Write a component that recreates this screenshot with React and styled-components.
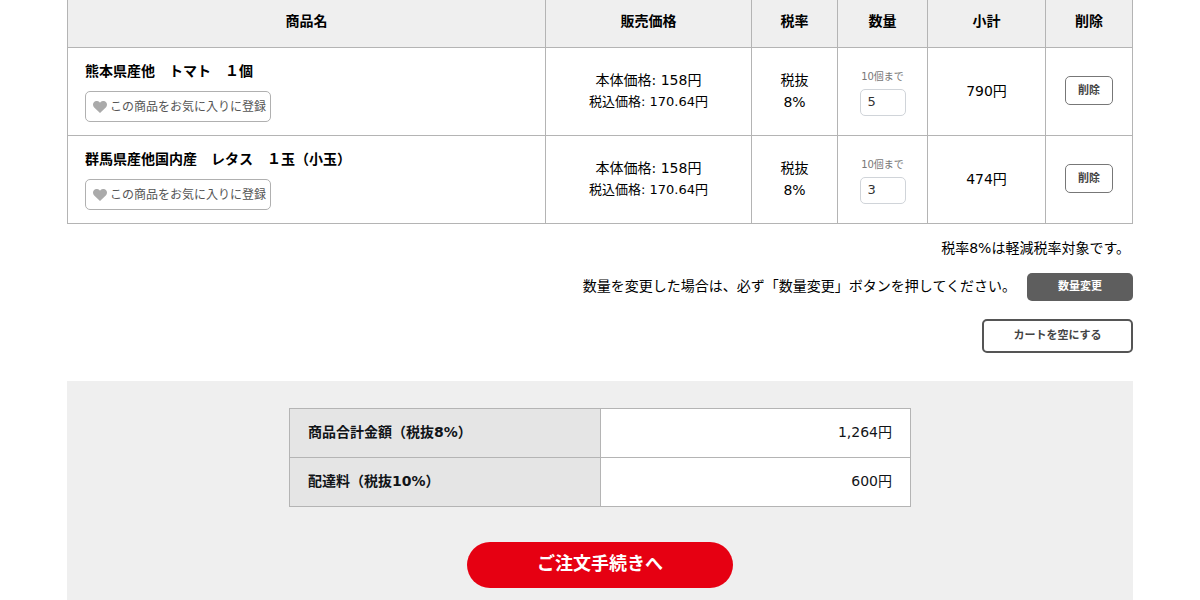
import React, { useState } from 'react';
import styled, { createGlobalStyle, css } from 'styled-components';

const GlobalStyle = createGlobalStyle`
  *, *::before, *::after { box-sizing: border-box; }
  body {
    margin: 0;
    background: #fff;
    color: #000;
    font-family: "DejaVu Sans", "Noto Sans CJK JP", sans-serif;
    font-size: 14px;
    line-height: 22px;
  }
  button, input { font-family: inherit; }
`;

const Page = styled.main`
  padding: 0 67px;
`;

const CartTable = styled.table`
  width: 100%;
  table-layout: fixed;
  border-collapse: collapse;
`;

const Col = styled.col`
  width: ${({ $width }) => ($width ? `${$width}px` : 'auto')};
`;

const HeadCell = styled.th`
  padding: 10px 0 15px;
  border: 1px solid #b4b4b4;
  border-top: 0;
  background: #efefef;
  font-weight: 700;
`;

const Cell = styled.td`
  padding: ${({ $product }) => ($product ? '12px 17px 13px' : '0 0 2px')};
  border: 1px solid #b4b4b4;
  text-align: ${({ $product }) => ($product ? 'left' : 'center')};
  vertical-align: middle;
`;

const ProductName = styled.div`
  margin-bottom: 9px;
  font-weight: 700;
`;

const FavoriteButton = styled.button`
  display: flex;
  align-items: center;
  gap: 3px;
  height: 31px;
  padding: 1px 4px 0 7px;
  border: 1px solid #b0b0b0;
  border-radius: 5px;
  background: #fff;
  color: #555;
  font-size: 12px;
  line-height: 18px;
  white-space: nowrap;
`;

const HeartIcon = styled.svg`
  flex: none;
  width: 14px;
  height: 12px;
  fill: #aaa;
`;

const TaxIncluded = styled.div`
  font-size: 13px;
`;

const QuantityField = styled.label`
  display: inline-flex;
  flex-direction: column;
  align-items: center;
  gap: 3px;
  padding-top: 2px;
  color: #777;
  font-size: 10px;
  line-height: 18px;
  vertical-align: middle;
`;

const QuantityInput = styled.input`
  width: 46px;
  height: 27px;
  padding: 0 7px 2px;
  border: 1px solid #d0d4d9;
  border-radius: 5px;
  background: #fff;
  color: #333;
  font-size: 13px;
`;

const variants = {
  remove: css`
    width: 48px;
    height: 29px;
    border: 1px solid #777;
    background: #fff;
    color: #444;
  `,
  update: css`
    width: 106px;
    height: 28px;
    border: 0;
    background: #5e5e5e;
    color: #fff;
  `,
  empty: css`
    width: 151px;
    height: 34px;
    border: 2px solid #555;
    background: #fff;
    color: #444;
  `,
};

const SmallButton = styled.button`
  padding: 0;
  border-radius: 5px;
  font-size: 11px;
  font-weight: 700;
  line-height: 16px;
  vertical-align: middle;
  ${({ $variant }) => variants[$variant]}
`;

const Actions = styled.div`
  display: flex;
  flex-direction: column;
  align-items: flex-end;
  padding: 13px 0 28px;
`;

const TaxNote = styled.p`
  margin: 0 0 14px;
  padding-right: 3px;
`;

const UpdateRow = styled.div`
  display: flex;
  align-items: center;
  gap: 11px;
  margin-bottom: 18px;
`;

const UpdateNote = styled.p`
  margin: 0;
  padding-bottom: 2px;
`;

const Summary = styled.section`
  display: flex;
  flex-direction: column;
  align-items: center;
  gap: 35px;
  padding: 27px 0 12px;
  background: #efefef;
`;

const SummaryTable = styled.table`
  width: 622px;
  max-width: 100%;
  table-layout: fixed;
  border-collapse: collapse;
  color: #111418;
`;

const SummaryLabel = styled.th`
  height: 49px;
  padding: 0 18px 2px;
  border: 1px solid #b4b4b4;
  background: #e5e5e5;
  text-align: left;
`;

const SummaryValue = styled.td`
  padding: 0 18px 2px;
  border: 1px solid #b4b4b4;
  background: #fff;
  text-align: right;
`;

const CheckoutButton = styled.button`
  width: 266px;
  height: 46px;
  padding: 0 0 2px;
  border: 0;
  border-radius: 23px;
  background: #e60012;
  color: #fff;
  font-size: 18px;
  font-weight: 700;
  line-height: 26px;
`;

const products = [
  { id: 'tomato', name: '熊本県産他　トマト　１個', quantity: '5', subtotal: '790円' },
  { id: 'lettuce', name: '群馬県産他国内産　レタス　１玉（小玉）', quantity: '3', subtotal: '474円' },
];

const totals = [
  { label: '商品合計金額（税抜8%）', value: '1,264円' },
  { label: '配達料（税抜10%）', value: '600円' },
];

const headings = ['商品名', '販売価格', '税率', '数量', '小計', '削除'];
const columnWidths = [null, 206, 86, 90, 118, 87];

function ProductRow({ product }) {
  const [quantity, setQuantity] = useState(product.quantity);
  return (
    <tr>
      <Cell $product>
        <ProductName>{product.name}</ProductName>
        <FavoriteButton type="button">
          <HeartIcon viewBox="0 0 14 12" aria-hidden="true">
            <path d="M7 12 1.2 6.5C-.3 5-.4 2.600.9 1.200 2.400-.4 4.900-.4 6.400 1.100L7 1.700l.6-.6C9.100-.4 11.600-.4 13.100 1.200c1.300 1.400 1.200 3.800-.3 5.300z" />
          </HeartIcon>
          この商品をお気に入りに登録
        </FavoriteButton>
      </Cell>
      <Cell>
        <div>本体価格: 158円</div>
        <TaxIncluded>税込価格: 170.64円</TaxIncluded>
      </Cell>
      <Cell>
        税抜
        <br />
        8%
      </Cell>
      <Cell>
        <QuantityField>
          10個まで
          <QuantityInput
            type="text"
            inputMode="numeric"
            value={quantity}
            onChange={(event) => setQuantity(event.target.value)}
          />
        </QuantityField>
      </Cell>
      <Cell>{product.subtotal}</Cell>
      <Cell>
        <SmallButton type="button" $variant="remove">削除</SmallButton>
      </Cell>
    </tr>
  );
}

export default function App() {
  return (
    <>
      <GlobalStyle />
      <Page lang="ja">
        <CartTable>
          <colgroup>
            {columnWidths.map((width, index) => (
              <Col key={headings[index]} $width={width} />
            ))}
          </colgroup>
          <thead>
            <tr>
              {headings.map((heading) => (
                <HeadCell key={heading} scope="col">{heading}</HeadCell>
              ))}
            </tr>
          </thead>
          <tbody>
            {products.map((product) => (
              <ProductRow key={product.id} product={product} />
            ))}
          </tbody>
        </CartTable>
        <Actions>
          <TaxNote>税率8%は軽減税率対象です。</TaxNote>
          <UpdateRow>
            <UpdateNote>数量を変更した場合は、必ず「数量変更」ボタンを押してください。</UpdateNote>
            <SmallButton type="button" $variant="update">数量変更</SmallButton>
          </UpdateRow>
          <SmallButton type="button" $variant="empty">カートを空にする</SmallButton>
        </Actions>
        <Summary>
          <SummaryTable>
            <tbody>
              {totals.map((total) => (
                <tr key={total.label}>
                  <SummaryLabel scope="row">{total.label}</SummaryLabel>
                  <SummaryValue>{total.value}</SummaryValue>
                </tr>
              ))}
            </tbody>
          </SummaryTable>
          <CheckoutButton type="button">ご注文手続きへ</CheckoutButton>
        </Summary>
      </Page>
    </>
  );
}
